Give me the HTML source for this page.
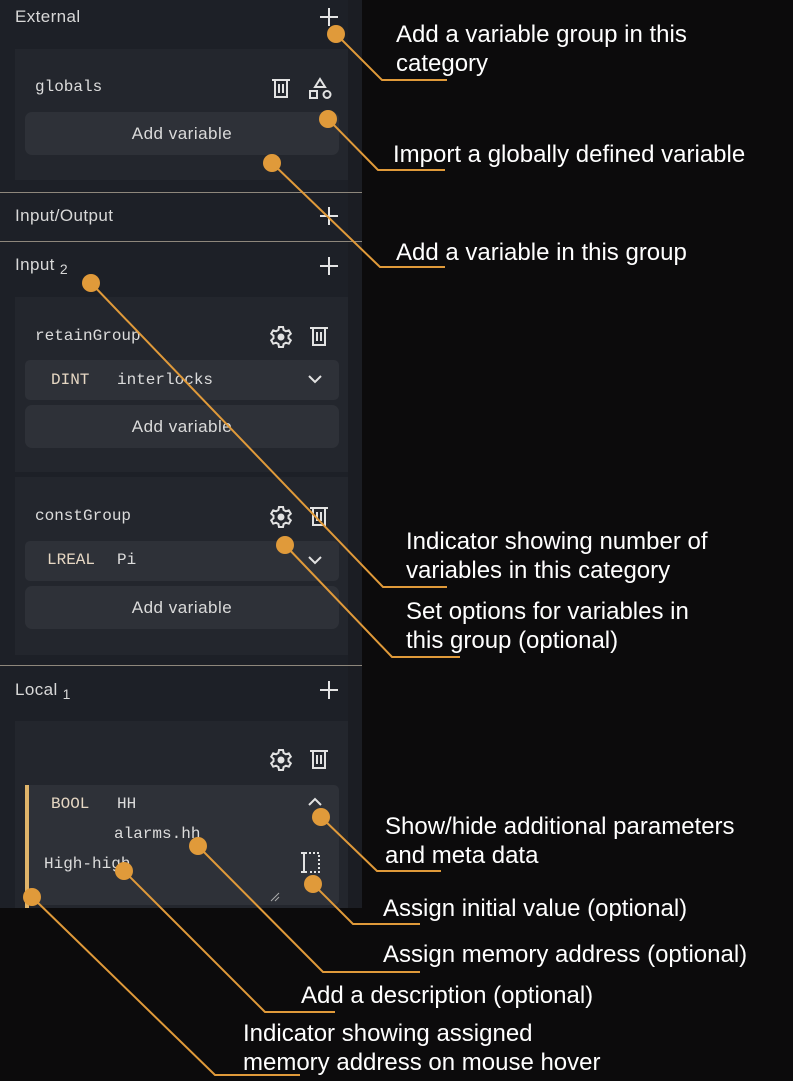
<!DOCTYPE html>
<html><head><meta charset="utf-8"><style>
*{margin:0;padding:0;box-sizing:border-box}
body{width:793px;height:1081px;background:#0c0b0c;position:relative;overflow:hidden;font-family:"Liberation Sans",Arial,sans-serif}
.panel{position:absolute;left:0;top:0;width:362px;height:908px;background:#1d2027;overflow:hidden}
.scr{position:absolute;left:348px;top:0;width:14px;height:908px;background:#1b1d23}
.h{position:absolute;left:15px;color:#d8d8d8;font-size:17px;letter-spacing:0.4px}
.h sub{font-size:14px;vertical-align:-4px;margin-left:5px}
.plus{position:absolute;left:320px;width:18px;height:18px}
.plus:before,.plus:after{content:"";position:absolute;background:#e4e4e4}
.plus:before{left:8px;top:0;width:2px;height:18px}
.plus:after{left:0;top:8px;width:18px;height:2px}
.div{position:absolute;left:0;width:362px;height:1px;background:#8e877c}
.card{position:absolute;left:15px;width:333px;background:#23262d}
.mono{font-family:"Liberation Mono","DejaVu Sans Mono",monospace;color:#dcdcdc;font-size:16px;position:absolute}
.btn{position:absolute;left:25px;width:314px;height:43px;background:#2e3138;border-radius:7px;color:#dadada;font-size:17px;letter-spacing:0.5px;text-align:center;line-height:43px}
.row{position:absolute;left:25px;width:314px;height:40px;background:#2e3138;border-radius:5px}
.ty{color:#e6d7c3}
svg.ic{position:absolute}
.ann{position:absolute;color:#fff;font-size:24px;line-height:29px}
</style></head><body>
<div class="panel">
<div class="scr"></div>
<div class="h" style="top:7px">External</div><div class="plus" style="top:8px"></div>
<div class="card" style="top:49px;height:131px"></div>
<div class="mono" style="left:35px;top:78px">globals</div>
<svg class="ic" style="left:270px;top:77px" width="22" height="22" viewBox="0 0 22 22" fill="none" stroke="#e2e2e2" stroke-width="2"><path d="M2 3h18M5 3v17h12V3M9 7v9M13 7v9"/></svg>
<svg class="ic" style="left:307px;top:77px" width="26" height="24" viewBox="0 0 26 24" fill="none" stroke="#e2e2e2" stroke-width="2"><path d="M13 2l5 8H8z"/><rect x="3" y="14" width="7" height="7"/><circle cx="20" cy="17.5" r="3.5"/></svg>
<div class="btn" style="top:112px">Add variable</div>
<div class="div" style="top:192px"></div>
<div class="h" style="top:206px">Input/Output</div><div class="plus" style="top:207px"></div>
<div class="div" style="top:241px"></div>
<div class="h" style="top:255px">Input<sub>2</sub></div><div class="plus" style="top:257px"></div>
<div class="card" style="top:297px;height:175px"></div>
<div class="mono" style="left:35px;top:327px">retainGroup</div>
<svg class="ic" style="left:269px;top:325px" width="24" height="24" viewBox="0 0 24 24" fill="none" stroke="#e2e2e2" stroke-width="2"><path d="M10 2h4l.6 3 2.3 1.3 2.9-1 2 3.4-2.3 2v2.6l2.3 2-2 3.4-2.9-1L14.6 19 14 22h-4l-.6-3-2.3-1.3-2.9 1-2-3.4 2.3-2v-2.6l-2.3-2 2-3.4 2.9 1L9.4 5z"/><circle cx="12" cy="12" r="2.5" fill="#e2e2e2"/></svg>
<svg class="ic" style="left:308px;top:325px" width="22" height="22" viewBox="0 0 22 22" fill="none" stroke="#e2e2e2" stroke-width="2"><path d="M2 3h18M5 3v17h12V3M9 7v9M13 7v9"/></svg>
<div class="row" style="top:360px"></div>
<div class="mono ty" style="left:51px;top:371px">DINT</div><div class="mono" style="left:117px;top:371px">interlocks</div>
<svg class="ic" style="left:307px;top:374px" width="16" height="10" viewBox="0 0 16 10" fill="none" stroke="#e2e2e2" stroke-width="2"><path d="M2 2l6 6 6-6"/></svg>
<div class="btn" style="top:405px">Add variable</div>
<div class="card" style="top:477px;height:178px"></div>
<div class="mono" style="left:35px;top:507px">constGroup</div>
<svg class="ic" style="left:269px;top:505px" width="24" height="24" viewBox="0 0 24 24" fill="none" stroke="#e2e2e2" stroke-width="2"><path d="M10 2h4l.6 3 2.3 1.3 2.9-1 2 3.4-2.3 2v2.6l2.3 2-2 3.4-2.9-1L14.6 19 14 22h-4l-.6-3-2.3-1.3-2.9 1-2-3.4 2.3-2v-2.6l-2.3-2 2-3.4 2.9 1L9.4 5z"/><circle cx="12" cy="12" r="2.5" fill="#e2e2e2"/></svg>
<svg class="ic" style="left:308px;top:505px" width="22" height="22" viewBox="0 0 22 22" fill="none" stroke="#e2e2e2" stroke-width="2"><path d="M2 3h18M5 3v17h12V3M9 7v9M13 7v9"/></svg>
<div class="row" style="top:541px"></div>
<div class="mono ty" style="left:47px;top:551px">LREAL</div><div class="mono" style="left:117px;top:551px">Pi</div>
<svg class="ic" style="left:307px;top:555px" width="16" height="10" viewBox="0 0 16 10" fill="none" stroke="#e2e2e2" stroke-width="2"><path d="M2 2l6 6 6-6"/></svg>
<div class="btn" style="top:586px">Add variable</div>
<div class="div" style="top:665px"></div>
<div class="h" style="top:680px">Local<sub>1</sub></div><div class="plus" style="top:681px"></div>
<div class="card" style="top:721px;height:200px"></div>
<svg class="ic" style="left:269px;top:748px" width="24" height="24" viewBox="0 0 24 24" fill="none" stroke="#e2e2e2" stroke-width="2"><path d="M10 2h4l.6 3 2.3 1.3 2.9-1 2 3.4-2.3 2v2.6l2.3 2-2 3.4-2.9-1L14.6 19 14 22h-4l-.6-3-2.3-1.3-2.9 1-2-3.4 2.3-2v-2.6l-2.3-2 2-3.4 2.9 1L9.4 5z"/><circle cx="12" cy="12" r="2.5" fill="#e2e2e2"/></svg>
<svg class="ic" style="left:308px;top:748px" width="22" height="22" viewBox="0 0 22 22" fill="none" stroke="#e2e2e2" stroke-width="2"><path d="M2 3h18M5 3v17h12V3M9 7v9M13 7v9"/></svg>
<div class="row" style="top:785px;height:120px"></div>
<div style="position:absolute;left:25px;top:785px;width:4px;height:125px;background:#e0b46a"></div>
<div class="mono ty" style="left:51px;top:795px">BOOL</div><div class="mono" style="left:117px;top:795px">HH</div>
<svg class="ic" style="left:307px;top:797px" width="16" height="10" viewBox="0 0 16 10" fill="none" stroke="#e2e2e2" stroke-width="2"><path d="M2 8l6-6 6 6"/></svg>
<div class="mono" style="left:114px;top:825px">alarms.hh</div>
<div class="mono" style="left:44px;top:855px">High-high</div>
<svg class="ic" style="left:299px;top:851px" width="24" height="24" viewBox="0 0 24 24" fill="none" stroke="#e2e2e2" stroke-width="2"><path d="M2 2h6M5 2v19M2 21h6"/><path d="M10 2h10v19h-10" stroke-dasharray="2 2"/></svg>
<svg class="ic" style="left:270px;top:892px" width="10" height="10" viewBox="0 0 10 10" stroke="#aaa" stroke-width="1"><path d="M1 9L9 1M5 9L9 5"/></svg>
</div>
<svg style="position:absolute;left:0;top:0" width="793" height="1081" fill="none" stroke="#e09a3a" stroke-width="2">
<path d="M336 34L382 80H447"/><path d="M328 119L378 170H445"/><path d="M272 163L380 267H445"/>
<path d="M91 283L383 587H447"/><path d="M285 545L392 657H460"/><path d="M321 817L377 871H441"/>
<path d="M313 884L353 924H420"/><path d="M198 846L323 972H420"/><path d="M124 871L265 1012H335"/><path d="M32 897L215 1075H300"/>
<g fill="#e09a3a" stroke="none"><circle cx="336" cy="34" r="9"/><circle cx="328" cy="119" r="9"/><circle cx="272" cy="163" r="9"/><circle cx="91" cy="283" r="9"/><circle cx="285" cy="545" r="9"/><circle cx="321" cy="817" r="9"/><circle cx="313" cy="884" r="9"/><circle cx="198" cy="846" r="9"/><circle cx="124" cy="871" r="9"/><circle cx="32" cy="897" r="9"/></g>
</svg>
<div class="ann" style="left:396px;top:20px">Add a variable group in this<br>category</div>
<div class="ann" style="left:393px;top:140px">Import a globally defined variable</div>
<div class="ann" style="left:396px;top:238px">Add a variable in this group</div>
<div class="ann" style="left:406px;top:527px">Indicator showing number of<br>variables in this category</div>
<div class="ann" style="left:406px;top:597px">Set options for variables in<br>this group (optional)</div>
<div class="ann" style="left:385px;top:812px">Show/hide additional parameters<br>and meta data</div>
<div class="ann" style="left:383px;top:894px">Assign initial value (optional)</div>
<div class="ann" style="left:383px;top:940px">Assign memory address (optional)</div>
<div class="ann" style="left:301px;top:981px">Add a description (optional)</div>
<div class="ann" style="left:243px;top:1019px">Indicator showing assigned<br>memory address on mouse hover</div>
</body></html>
